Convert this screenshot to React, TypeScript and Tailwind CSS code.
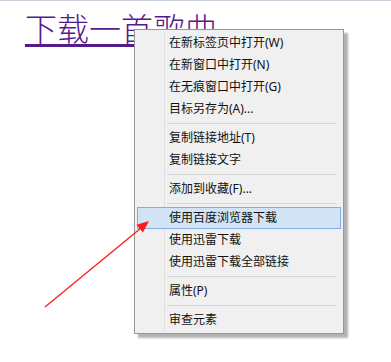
import React from "react"

const groups: string[][] = [
  ["在新标签页中打开(W)", "在新窗口中打开(N)", "在无痕窗口中打开(G)", "目标另存为(A)..."],
  ["复制链接地址(T)", "复制链接文字"],
  ["添加到收藏(F)..."],
  ["使用百度浏览器下载", "使用迅雷下载", "使用迅雷下载全部链接"],
  ["属性(P)"],
  ["审查元素"],
]

const highlighted = "使用百度浏览器下载"

function MenuRow({ label }: { label: string }) {
  if (label === highlighted) {
    return (
      <div className="flex h-[22px] items-center border border-[#84ace0] bg-[#d1e3f5] pl-[31px]">
        <span>{label}</span>
      </div>
    )
  }
  return (
    <div className="flex h-[22px] items-center">
      <div className="h-full w-[28px] border-r border-[#e0e0e0]" />
      <span className="pl-[4px]">{label}</span>
    </div>
  )
}

function Separator() {
  return (
    <div className="flex h-[7px] items-center">
      <div className="h-full w-[28px] border-r border-[#e0e0e0]" />
      <div className="ml-[2px] mr-[4px] h-px flex-1 bg-[#d7d7d7]" />
    </div>
  )
}

export default function App() {
  return (
    <div className="relative h-[362px] w-[391px] overflow-hidden bg-white">
      <div className="h-px bg-[#c9d4df]" />
      <div className="pl-[25px] pt-[10px]">
        <a
          href="#"
          className="text-[32px] font-light leading-[32px] text-[#551a8b] underline decoration-[3px] underline-offset-[3px]"
          style={{ fontFamily: '"Noto Sans CJK SC", sans-serif' }}
        >
          下载一首歌曲
        </a>
      </div>

      <div
        className="absolute left-[134px] top-[29px] w-[210px] border border-[#979797] bg-[#f0f0f0] px-[2px] py-[2px] text-[12px] text-[#111] shadow-[4px_4px_2px_rgba(0,0,0,0.3)]"
        style={{ fontFamily: '"Noto Sans", "Noto Sans CJK SC", sans-serif' }}
      >
        {groups.map((group, gi) => (
          <div key={gi}>
            {gi > 0 && <Separator />}
            {group.map((label) => (
              <MenuRow key={label} label={label} />
            ))}
          </div>
        ))}
      </div>

      <svg
        className="pointer-events-none absolute left-0 top-0"
        width="391"
        height="362"
        viewBox="0 0 391 362"
      >
        <line x1="45" y1="307" x2="141" y2="228" stroke="#ff1a1a" strokeWidth="1.3" />
        <polygon points="149,221 142.9,232.5 136.6,224.8" fill="#ff1a1a" />
      </svg>
    </div>
  )
}
